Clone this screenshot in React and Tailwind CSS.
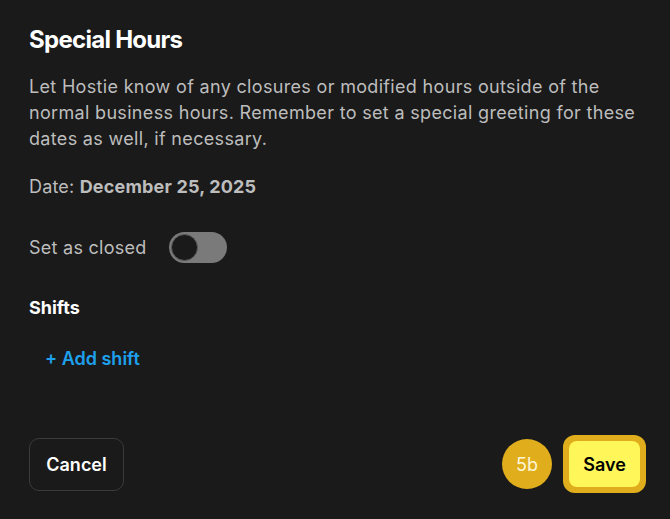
export default function App() {
  return (
    <div
      className="w-[670px] h-[519px] bg-[#1a1a1a] text-white flex flex-col px-[29px] pt-[24px] pb-[26px]"
      style={{ fontFamily: 'Inter, "Noto Sans", sans-serif' }}
    >
      <h1 className="text-[24px] font-bold leading-[32px] tracking-[-0.03em] text-white">Special Hours</h1>

      <p className="mt-[18px] text-[18px] leading-[26px] text-[#bdbdbd] tracking-[0.018em]">
        Let Hostie know of any closures or modified hours outside of the normal business hours. Remember to set a
        special greeting for these dates as well, if necessary.
      </p>

      <div className="mt-[22px] text-[18px] leading-[26px] text-[#bdbdbd] tracking-[0.01em]">
        Date: <span className="font-bold">December 25, 2025</span>
      </div>

      <div className="mt-[32px] flex items-center gap-[22px]">
        <span className="text-[18px] leading-[26px] text-[#bdbdbd] tracking-[0.015em]">Set as closed</span>
        <button className="w-[58px] h-[31px] rounded-full bg-[#7a7a7a] p-[2px] flex items-center">
          <span className="w-[27px] h-[27px] rounded-full bg-[#1a1a1a] border border-[#5a5a5a]" />
        </button>
      </div>

      <div className="mt-[32px] text-[18px] leading-[26px] font-bold text-white">Shifts</div>

      <button className="mt-[25px] ml-[16px] self-start text-[18px] leading-[26px] font-semibold text-[#1ea1ec]">
        + Add shift
      </button>

      <div className="mt-auto flex items-center justify-between">
        <button className="w-[95px] h-[53px] rounded-[10px] border border-[#3b3b3b] text-[18px] font-semibold text-white">
          Cancel
        </button>
        <div className="flex items-center gap-[11px] mr-[-5px]">
          <div className="w-[50px] h-[50px] rounded-full bg-[#e0ad1d] flex items-center justify-center text-[18px] text-[#fff6d6]">
            5b
          </div>
          <div className="rounded-[12px] bg-[#e0ad1d] p-[6px]">
            <button className="w-[71px] h-[46px] rounded-[8px] bg-[#fff75a] text-[18px] font-semibold text-black">
              Save
            </button>
          </div>
        </div>
      </div>
    </div>
  );
}
